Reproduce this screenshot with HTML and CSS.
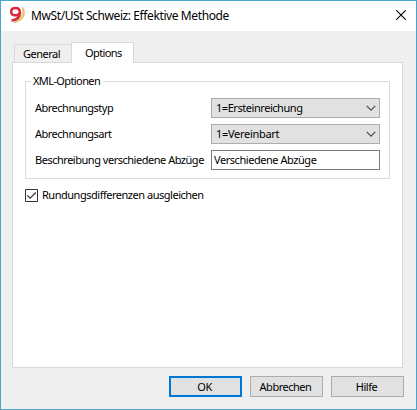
FILE: index.html
```html
<!DOCTYPE html>
<html lang="de">
<head>
<meta charset="utf-8">
<title>MwSt/USt Schweiz: Effektive Methode</title>
<link rel="stylesheet" href="styles.css">
</head>
<body>
<div class="dialog">
  <header class="titlebar">
    <svg class="logo" width="16" height="17" viewBox="0 0 16 17">
      <path d="M13.500 1C18 7 15 16 4 16.800 10.500 14.500 14.500 9 13.500 1z" fill="#e9ce74" stroke="#c9ad62" stroke-width=".5"/>
      <path d="M10.500 7.200C9.800 8.800 8.300 9.300 6.300 9.300 3.700 9.300 2.200 7.900 2.200 5.500 2.200 3.200 4 1.900 6.500 1.900c2.800 0 4.400 1.700 4.400 4.700C10.900 11.500 8 14.300 2.500 14.400" fill="none" stroke="#d9283c" stroke-width="2.500"/>
    </svg>
    <h1 class="title">MwSt/USt Schweiz: Effektive Methode</h1>
    <svg class="close" width="10" height="10" viewBox="0 0 10 10"><path d="M.3.3l9.400 9.400M9.700.3l-9.400 9.400" stroke="#000" stroke-width="1.100"/></svg>
  </header>
  <nav class="tabs">
    <div class="tab"><span class="t-general">General</span></div>
    <div class="tab active"><span class="t-options">Options</span></div>
  </nav>
  <main class="panel">
    <section class="group">
      <div class="legend"><span class="t-legend">XML-Optionen</span></div>
      <div class="row"><label class="t-typ">Abrechnungstyp</label>
        <div class="select"><span class="t-erst">1=Ersteinreichung</span><svg width="10" height="6" viewBox="0 0 10 6"><path d="M.7.8L5 5.100 9.300.8" fill="none" stroke="#444" stroke-width="1.100"/></svg></div></div>
      <div class="row"><label class="t-art">Abrechnungsart</label>
        <div class="select"><span class="t-ver">1=Vereinbart</span><svg width="10" height="6" viewBox="0 0 10 6"><path d="M.7.8L5 5.100 9.300.8" fill="none" stroke="#444" stroke-width="1.100"/></svg></div></div>
      <div class="row"><label class="t-besch">Beschreibung verschiedene Abzüge</label>
        <div class="field"><span class="t-abz">Verschiedene Abzüge</span></div></div>
    </section>
    <div class="check">
      <svg width="13" height="13" viewBox="0 0 13 13" fill="none"><path d="M.5.5h12v12H.5z" stroke="#333"/><path d="M2.300 6.300l2.800 2.900 5.700-5.700" stroke="#333" stroke-width="1.200"/></svg>
      <span class="t-rund">Rundungsdifferenzen ausgleichen</span>
    </div>
  </main>
  <footer class="buttons">
    <div class="button primary"><span class="t-ok">OK</span></div>
    <div class="button"><span class="t-abbr">Abbrechen</span></div>
    <div class="button"><span class="t-hilfe">Hilfe</span></div>
  </footer>
</div>
</body>
</html>
```
FILE: styles.css
```css
* { box-sizing: border-box; }
body { margin: 0; font: 11px/16px "Noto Sans", sans-serif; color: #000; letter-spacing: -.48px; }
svg { display: block; flex: none; }
span, label, h1 { white-space: nowrap; }
.dialog { width: 417px; height: 410px; border: 1px solid #4aa5cd; background: #efefef; display: flex; flex-direction: column; }
.titlebar { height: 30px; flex: none; background: #fff; display: flex; align-items: flex-start; padding: 5px 10px 0 8px; }
.title { margin: 2px 0 0 6px; font-size: 12px; line-height: 16px; font-weight: 400; letter-spacing: -.4px; }
.close { margin: 4px 0 0 auto; }
.tabs { height: 31px; flex: none; display: flex; align-items: flex-end; padding-left: 13px; }
.tab { width: 57px; height: 18px; border: 1px solid #d9d9d9; border-width: 1px 0 0 1px; padding-left: 8px; line-height: 18px; }
.tab.active { width: 63px; height: 21px; border-width: 1px 1px 0; background: #fff; padding-left: 13px; line-height: 20px; margin-bottom: -1px; position: relative; }
.panel { width: 391px; height: 306px; flex: none; margin-left: 11px; background: #fff; border: 1px solid #d9d9d9; padding: 18px 12px 0; }
.group { width: 365px; height: 98px; border: 1px solid #dcdcdc; padding: 0 9px; }
.legend { height: 16px; margin-top: -9px; display: flex; }
.legend span { background: #fff; padding: 0 3px 0 2px; margin-left: -4px; }
.row { height: 20px; margin-top: 6px; display: flex; align-items: center; justify-content: space-between; }
.legend + .row { margin-top: 9px; }
.select, .field { width: 169px; height: 20px; display: flex; align-items: center; }
.select { background: #e1e1e1; border: 1px solid #adadad; justify-content: space-between; padding: 0 3px 0 4px; }
.field { background: #fff; border: 1px solid #7a7a7a; padding-left: 2px; }
.check { height: 16px; margin-top: 8px; display: flex; align-items: center; gap: 4px; }
.buttons { display: flex; justify-content: flex-end; gap: 8px; padding: 8px 12px 0 0; }
.button { width: 73px; height: 21px; border: 1px solid #adadad; background: #e1e1e1; display: flex; align-items: center; justify-content: center; padding-right: 2px; }
.primary { border: 2px solid #0078d7; }
.t-general { letter-spacing: -.5px; }
.t-options { letter-spacing: -.6px; }
.t-legend { letter-spacing: -.6px; }
.t-typ { letter-spacing: -.5px; }
.t-art { letter-spacing: -.5px; }
.t-erst, .t-abz { letter-spacing: -.45px; }
.t-ver { letter-spacing: -.3px; }
```
